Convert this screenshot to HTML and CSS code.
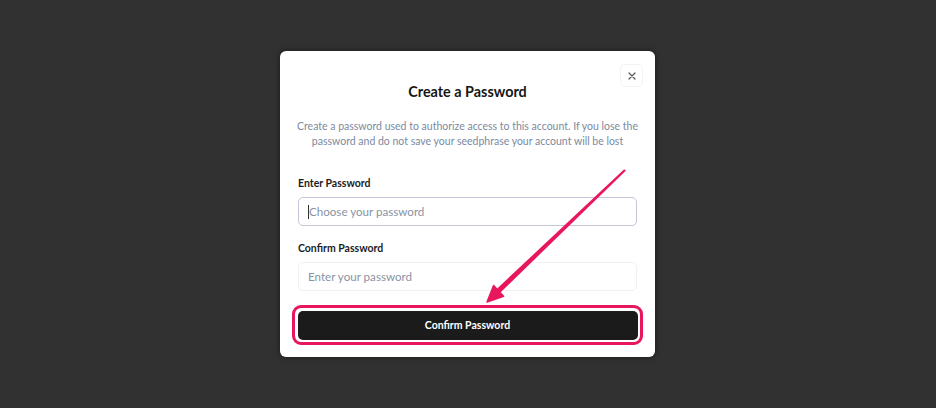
FILE: index.html
```html
<!DOCTYPE html>
<html lang="en">
<head>
<meta charset="utf-8">
<title>Create a Password</title>
<link rel="stylesheet" href="styles.css">
</head>
<body>
<div class="backdrop">
  <div class="dialog">
    <div class="dialog-top">
      <button class="close" aria-label="Close">
        <svg width="10" height="10" viewBox="0 0 10 10"><path d="M2 2 L8 8 M8 2 L2 8" stroke="#555" stroke-width="1.2" stroke-linecap="round"/></svg>
      </button>
    </div>
    <h1 class="title">Create a Password</h1>
    <p class="desc">Create a password used to authorize access to this account. If you lose the password and do not save your seedphrase your account will be lost</p>
    <label class="label">Enter Password</label>
    <div class="input focused"><span class="caret"></span><span class="ph">Choose your password</span></div>
    <label class="label second">Confirm Password</label>
    <div class="input"><span class="ph">Enter your password</span></div>
    <div class="ring">
      <button class="confirm">Confirm Password</button>
    </div>
  </div>
  <svg class="arrow" width="936" height="408" viewBox="0 0 936 408">
    <polygon points="625.8,170.8 624.2,169.2 495.1,290.4 498.9,294.0" fill="#e8175d"/>
    <polygon points="487,302 503.6,296.2 493.6,285.6" fill="#e8175d" stroke="#e8175d" stroke-width="1.5" stroke-linejoin="round"/>
  </svg>
</div>
</body>
</html>
```

FILE: styles.css
```css
* { box-sizing: border-box; }
html, body { margin: 0; padding: 0; }
body {
  width: 936px;
  height: 408px;
  background: #313131;
  font-family: "Lato", "Open Sans", sans-serif;
  overflow: hidden;
}
.backdrop {
  position: relative;
  width: 936px;
  height: 408px;
  padding-top: 51px;
  display: flex;
  justify-content: center;
  align-items: flex-start;
}
.dialog {
  width: 375px;
  height: 306px;
  margin-left: -1px;
  background: #fff;
  border-radius: 6px;
  box-shadow: 0 0 6px rgba(0,0,0,0.5);
  padding: 13px 18px 0 18px;
  display: flex;
  flex-direction: column;
}
.dialog-top {
  display: flex;
  justify-content: flex-end;
  height: 23px;
  margin-right: -6px;
}
.close {
  width: 23px;
  height: 23px;
  border: 1px solid #f3f3f5;
  border-radius: 5px;
  background: #fff;
  padding: 0;
  display: flex;
  align-items: center;
  justify-content: center;
}
.title {
  margin: -5px 0 0 0;
  text-align: center;
  font-size: 14.4px;
  font-weight: 700;
  color: #161616;
  line-height: 20px;
}
.desc {
  margin: 17px -5px 0 -5px;
  text-align: center;
  font-size: 10.5px;
  line-height: 15px;
  color: #7c8aa0;
}
.label {
  margin-top: 27px;
  font-size: 10.5px;
  font-weight: 700;
  color: #1c1c1c;
  line-height: 14px;
}
.label.second { margin-top: 15px; }
.input {
  margin-top: 7px;
  height: 29px;
  border: 1px solid #f1f1f4;
  border-radius: 5px;
  display: flex;
  align-items: center;
  padding-left: 9px;
  font-size: 11.6px;
  color: #8a93a3;
}
.input.focused { border-color: #c3c6d6; }
.caret {
  width: 1px;
  height: 14px;
  background: #333;
}
.ring {
  margin: 14px -6px 0 -6px;
  border: 3.5px solid #e8175d;
  border-radius: 9px;
  padding: 2.5px;
}
.confirm {
  display: block;
  width: 100%;
  height: 29px;
  background: #1b1b1b;
  color: #fff;
  border: none;
  border-radius: 5px;
  font-family: inherit;
  font-size: 10.5px;
  font-weight: 700;
}
.arrow {
  position: absolute;
  left: 0;
  top: 0;
  pointer-events: none;
}
```
